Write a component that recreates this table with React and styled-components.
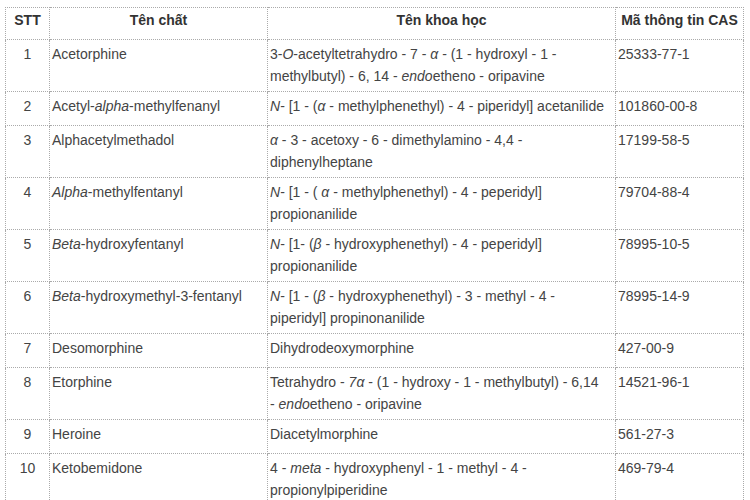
import React from 'react'
import styled, {createGlobalStyle} from 'styled-components'

const GlobalStyle = createGlobalStyle`
    body {
        margin: 0;
        background: #fff;
        font-family: 'Liberation Sans', Arial, sans-serif;
    }
`

const Page = styled.div`
    padding: 7px 7px 0 5px;
`

const Table = styled.table`
    width: 738px;
    table-layout: fixed;
    border-collapse: collapse;
    font-size: 14px;
    color: #444;
`

const Row = styled.tr`
    height: 34px;
`

const HeadCell = styled.th`
    border: 1px dotted #aaa;
    padding: 1px 2px 0;
    height: 30px;
    line-height: 22px;
    font-weight: bold;
    color: #333;
    text-align: center;
    vertical-align: top;
`

const Cell = styled.td`
    border: 1px dotted #aaa;
    padding: 3px 2px 4px;
    line-height: 22px;
    vertical-align: top;
    text-align: ${p => p.$center ? 'center' : 'left'};
    white-space: ${p => p.$nowrap ? 'nowrap' : 'normal'};
`

const rows = [
    {
        name: 'Acetorphine',
        sci: <>3-<i>O</i>-acetyltetrahydro - 7 - <i>α</i> - (1 - hydroxyl - 1 -<br />methylbutyl) - 6, 14 - <i>endo</i>etheno - oripavine</>,
        cas: '25333-77-1',
    },
    {
        name: <>Acetyl-<i>alpha</i>-methylfenanyl</>,
        sci: <><i>N</i>- [1 - (<i>α</i> - methylphenethyl) - 4 - piperidyl] acetanilide</>,
        cas: '101860-00-8',
    },
    {
        name: 'Alphacetylmethadol',
        sci: <><i>α</i> - 3 - acetoxy - 6 - dimethylamino - 4,4 -<br />diphenylheptane</>,
        cas: '17199-58-5',
    },
    {
        name: <><i>Alpha</i>-methylfentanyl</>,
        sci: <><i>N</i>- [1 - ( <i>α</i> - methylphenethyl) - 4 - peperidyl]<br />propionanilide</>,
        cas: '79704-88-4',
    },
    {
        name: <><i>Beta</i>-hydroxyfentanyl</>,
        sci: <><i>N</i>- [1- (<i>β</i> - hydroxyphenethyl) - 4 - peperidyl]<br />propionanilide</>,
        cas: '78995-10-5',
    },
    {
        name: <><i>Beta</i>-hydroxymethyl-3-fentanyl</>,
        sci: <><i>N</i>- [1 - (<i>β</i> - hydroxyphenethyl) - 3 - methyl - 4 -<br />piperidyl] propinonanilide</>,
        cas: '78995-14-9',
    },
    {
        name: 'Desomorphine',
        sci: 'Dihydrodeoxymorphine',
        cas: '427-00-9',
    },
    {
        name: 'Etorphine',
        sci: <>Tetrahydro - <i>7α</i> - (1 - hydroxy - 1 - methylbutyl) - 6,14<br />- <i>endo</i>etheno - oripavine</>,
        cas: '14521-96-1',
    },
    {
        name: 'Heroine',
        sci: 'Diacetylmorphine',
        cas: '561-27-3',
    },
    {
        name: 'Ketobemidone',
        sci: <>4 - <i>meta</i> - hydroxyphenyl - 1 - methyl - 4 -<br />propionylpiperidine</>,
        cas: '469-79-4',
    },
]

export default function App() {
    return <Page>
        <GlobalStyle />
        <Table>
            <colgroup>
                <col style={{width: 44}} />
                <col style={{width: 218}} />
                <col style={{width: 348}} />
                <col style={{width: 128}} />
            </colgroup>
            <thead>
                <tr>
                    <HeadCell>STT</HeadCell>
                    <HeadCell>Tên chất</HeadCell>
                    <HeadCell>Tên khoa học</HeadCell>
                    <HeadCell>Mã thông tin CAS</HeadCell>
                </tr>
            </thead>
            <tbody>
                {rows.map((r, i) =>
                    <Row key={i}>
                        <Cell $center>{i + 1}</Cell>
                        <Cell>{r.name}</Cell>
                        <Cell $nowrap>{r.sci}</Cell>
                        <Cell $nowrap>{r.cas}</Cell>
                    </Row>
                )}
            </tbody>
        </Table>
    </Page>
}
